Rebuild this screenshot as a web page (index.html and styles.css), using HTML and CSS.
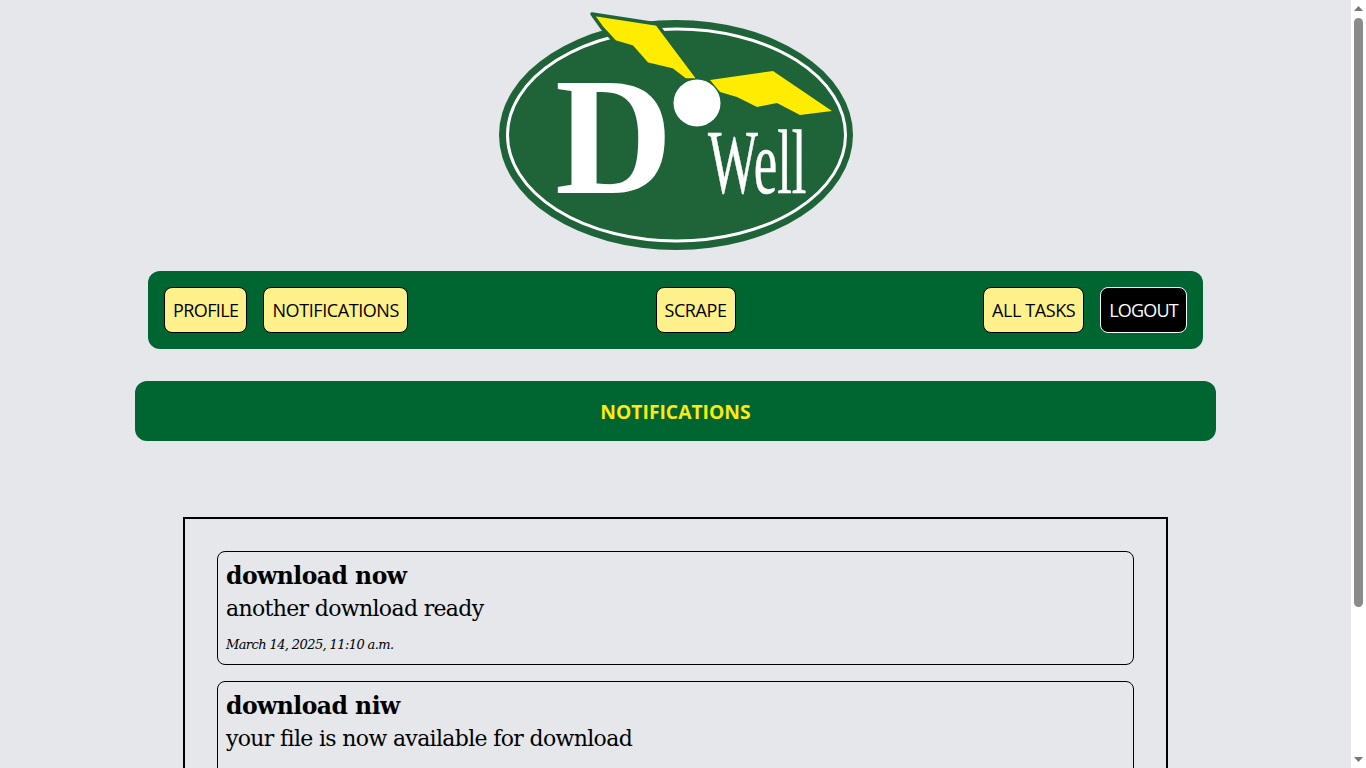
FILE: index.html
```html
<!DOCTYPE html>
<html lang="en">
<head>
<meta charset="utf-8">
<title>Notifications</title>
<link rel="stylesheet" href="styles.css">
</head>
<body>
<header class="logo-wrap">
  <svg class="logo" viewBox="499 8 354 243" width="354" height="243" role="img" aria-label="D'Well">
    <ellipse cx="676" cy="135" rx="177" ry="115" fill="#1f6339"/>
    <ellipse cx="676.5" cy="135" rx="169" ry="106" fill="none" stroke="#fff" stroke-width="3"/>
    <path d="M592 14 L657 24 L699 80 L685 80 L672 70 L647 64 L632 47 L615 42 L602 28 Z" fill="#ffec00" stroke="#1f6339" stroke-width="3.5" stroke-linejoin="round"/>
    <path d="M710 80 L773 71 L832 111 L800 115 L777 103 L757 107 L737 97 L720 92 Z" fill="#ffec00"/>
    <circle cx="697" cy="103" r="23.5" fill="#fff"/>
    <text class="logo-d" transform="translate(555 193) scale(0.976 1)">D</text>
    <text class="logo-well" transform="translate(708 193) scale(0.575 1)">Well</text>
  </svg>
</header>
<nav class="nav">
  <div class="nav-group">
    <a class="btn btn-tight">PROFILE</a>
    <a class="btn">NOTIFICATIONS</a>
  </div>
  <div class="nav-group">
    <a class="btn">SCRAPE</a>
  </div>
  <div class="nav-group">
    <a class="btn">ALL TASKS</a>
    <a class="btn btn-dark">LOGOUT</a>
  </div>
</nav>
<h1 class="title">NOTIFICATIONS</h1>
<main class="list">
  <article class="card">
    <h2>download now</h2>
    <p>another download ready</p>
    <small>March 14, 2025, 11:10 a.m.</small>
  </article>
  <article class="card">
    <h2>download niw</h2>
    <p>your file is now available for download</p>
    <small>March 14, 2025, 11:05 a.m.</small>
  </article>
  <article class="card">
    <h2>download ready</h2>
    <p>your file is now available for download</p>
    <small>March 14, 2025, 11:00 a.m.</small>
  </article>
</main>
<aside class="scrollbar" aria-hidden="true">
  <svg class="sb-arrow" viewBox="0 0 9 5" width="9" height="5"><path d="M4.5 0L9 5H0z"/></svg>
  <div class="sb-track"><div class="sb-thumb"></div></div>
  <svg class="sb-arrow" viewBox="0 0 9 5" width="9" height="5"><path d="M0 0H9L4.5 5z"/></svg>
</aside>
</body>
</html>
```
FILE: styles.css
```css
html {
  background: #e5e7eb;
}
body {
  margin: 0;
  padding-right: 15px;
  background: #e5e7eb;
  color: #000;
  font-family: "DejaVu Serif", "Liberation Serif", serif;
}
.scrollbar {
  position: fixed;
  top: 0;
  right: 0;
  bottom: 0;
  width: 15px;
  display: flex;
  flex-direction: column;
  align-items: center;
  justify-content: space-between;
  box-sizing: border-box;
  padding: 6px 0;
  background: #fff;
}
.sb-arrow {
  display: block;
  fill: #777;
}
.sb-track {
  flex: 1;
  width: 9px;
  margin: 7px 0;
}
.sb-thumb {
  width: 9px;
  height: 589px;
  border-radius: 5px;
  background: #8b8b8b;
}
.logo-wrap {
  display: flex;
  justify-content: center;
  padding: 8px 0 20px;
}
.logo {
  display: block;
}
.logo-d {
  font: 700 167px "Liberation Serif", serif;
  fill: #fff;
}
.logo-well {
  font: 400 92px "Liberation Serif", serif;
  fill: #fff;
  stroke: #fff;
  stroke-width: 0.6px;
}
.nav {
  display: flex;
  justify-content: space-between;
  align-items: center;
  width: 1055px;
  box-sizing: border-box;
  margin: 0 auto;
  padding: 16px;
  background: #006631;
  border-radius: 12px;
}
.nav-group {
  display: flex;
  gap: 16px;
}
.btn {
  display: block;
  height: 46px;
  box-sizing: border-box;
  padding: 0 8px;
  border: 1px solid #000;
  border-radius: 8px;
  background: #fef08a;
  color: #000;
  font: 400 18px/44px "Open Sans", sans-serif;
  letter-spacing: -0.42px;
}
.btn-tight {
  letter-spacing: -0.6px;
}
.btn-dark {
  background: #000;
  border-color: #fff;
  color: #fff;
  letter-spacing: -0.8px;
}
.title {
  width: 80%;
  height: 60px;
  margin: 32px auto 76px;
  background: #006631;
  border-radius: 12px;
  color: #fde910;
  font: 700 19.3px/62px "Open Sans", sans-serif;
  text-align: center;
}
.list {
  display: flex;
  flex-direction: column;
  gap: 16px;
  width: 985px;
  box-sizing: border-box;
  margin: 0 auto 30px;
  padding: 32px;
  border: 2px solid #000;
}
.card {
  height: 114px;
  box-sizing: border-box;
  padding: 8px;
  border: 1px solid #000;
  border-radius: 8px;
}
.card h2 {
  margin: 0;
  font-size: 23.5px;
  font-weight: 700;
  line-height: 32px;
  letter-spacing: -0.53px;
}
.card p {
  margin: 0 0 9px;
  font-size: 22px;
  line-height: 34px;
  letter-spacing: -0.66px;
}
.card small {
  display: block;
  font-size: 13px;
  font-style: italic;
  line-height: 20px;
  letter-spacing: -0.6px;
}
```
